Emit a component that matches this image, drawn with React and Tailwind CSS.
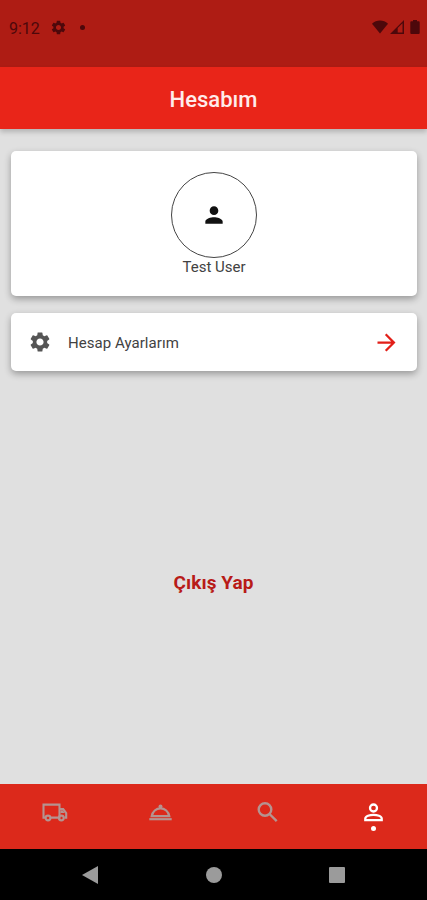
import { MdSettings, MdPerson, MdArrowForward } from "react-icons/md";

function StatusBar() {
  return (
    <div className="flex h-[67px] items-start bg-[#ae1c14] pl-[9px] pr-[7px] pt-[18px] text-[#4d080b]">
      <span className="w-[41px] pt-px text-[16px] leading-5">9:12</span>
      <MdSettings className="mt-px size-[17px]" />
      <span className="ml-[13px] mt-[7px] size-[5px] rounded-full bg-[#4d080b]" />
      <div className="ml-auto mt-[2px] flex items-start">
        <svg className="h-[14px] w-[16px]" viewBox="0 0 16 14" fill="currentColor">
          <path d="M0 3.7C4.5-.5 11.5-.5 16 3.7L8 13.5z" />
        </svg>
        <svg className="ml-[2px] mr-[6px] h-[14px] w-[14px]" viewBox="0 0 14 14" fill="currentColor">
          <path fillRule="evenodd" d="M0 14 14 0v14zM7.7 8v4.500h4.800V3.300z" />
        </svg>
        <svg className="h-[14px] w-[10px]" viewBox="0 0 10 14" fill="currentColor">
          <path d="M3 0h4v1.300h1.500c.8 0 1.200.5 1.200 1.200v10.200c0 .8-.5 1.300-1.200 1.300h-7C.8 14 .3 13.500.3 12.700V2.500C.3 1.800.8 1.300 1.500 1.300H3z" />
        </svg>
      </div>
    </div>
  );
}

function TruckIcon() {
  return (
    <svg className="size-[27px]" viewBox="0 0 27 27" fill="none" stroke="currentColor" strokeWidth="2.1">
      <path d="M4.500 18.600H2.500V5.600h16v13H10" />
      <path d="M18.500 10h3.700l3 4v4.600h-1.800" />
      <path d="M19.500 11.200h2.200l2 2.900h-4.200z" fill="currentColor" stroke="none" />
      <circle cx="7" cy="19" r="2.400" />
      <circle cx="20.300" cy="19" r="2.400" />
    </svg>
  );
}

function ServiceIcon() {
  return (
    <svg className="size-[27px]" viewBox="0 0 27 27" fill="none" stroke="currentColor" strokeWidth="2.200">
      <path d="M2.300 20.200h22.400" />
      <path d="M4.700 17.200c.8-4.700 4.500-7.900 8.800-7.900s8 3.200 8.800 7.900z" />
      <circle cx="13.500" cy="7.600" r="2" fill="currentColor" stroke="none" />
    </svg>
  );
}

function SearchIcon() {
  return (
    <svg className="size-[27px]" viewBox="0 0 27 27" fill="none" stroke="currentColor" strokeWidth="2.400">
      <circle cx="11" cy="10.500" r="6.300" />
      <path d="M15.500 15l7.200 7.200" />
    </svg>
  );
}

function AccountIcon() {
  return (
    <svg className="size-[27px]" viewBox="0 0 27 27" fill="none" stroke="currentColor" strokeWidth="2.300">
      <circle cx="13.500" cy="9" r="3.500" />
      <path d="M5.300 21.200v-1.700c0-2.300 4.500-3.700 8.200-3.700s8.200 1.400 8.200 3.700v1.700z" />
    </svg>
  );
}

const cardClass =
  "ml-[11px] mr-[10px] rounded-[5px] bg-white shadow-[0_3px_7px_rgba(0,0,0,0.32)]";

export default function App() {
  return (
    <div className="flex h-[900px] w-[427px] flex-col overflow-hidden bg-[#e0e0e0] font-['Roboto',sans-serif] text-[#424242]">
      <StatusBar />
      <header className="z-10 flex h-[62px] items-center justify-center bg-[#e92519] pt-[2px] text-[22px] font-medium text-[#ffeceb] shadow-[0_3px_5px_rgba(0,0,0,0.2)]">
        <h1>Hesabım</h1>
      </header>

      <main className="flex flex-1 flex-col pt-[22px]">
        <section className={`${cardClass} flex h-[145px] flex-col items-center pt-[21px]`}>
          <div className="flex size-[86px] items-center justify-center rounded-full border border-[#444]">
            <MdPerson className="size-[26px] text-[#111]" />
          </div>
          <p className="text-[15px] leading-[18px]">Test User</p>
        </section>

        <button className={`${cardClass} mt-[17px] flex h-[58px] items-center pl-[17px] pr-[17px]`}>
          <MdSettings className="size-6 text-[#555]" />
          <span className="ml-4 pt-px text-[15px] leading-[18px] tracking-[0.05px]">Hesap Ayarlarım</span>
          <MdArrowForward className="ml-auto size-[27px] text-[#e21f18]" />
        </button>

        <button className="mt-[200px] self-center text-[19px] font-bold leading-6 tracking-[0.05px] text-[#b81b18]">
          Çıkış Yap
        </button>
      </main>

      <nav className="grid h-[65px] grid-cols-4 justify-items-center bg-[#dc291b] pl-px pt-[15px] text-[#b59390]">
        <TruckIcon />
        <ServiceIcon />
        <SearchIcon />
        <div className="flex flex-col items-center text-white">
          <AccountIcon />
          <span className="size-[5px] rounded-full bg-white" />
        </div>
      </nav>

      <div className="flex h-[51px] items-center justify-between bg-black px-[82px] text-[#9b9b9b]">
        <svg className="h-[18px] w-[16px]" viewBox="0 0 16 18" fill="currentColor">
          <path d="M16 0v18L0 9z" />
        </svg>
        <span className="size-4 rounded-full bg-[#9b9b9b]" />
        <span className="size-4 rounded-[1px] bg-[#9b9b9b]" />
      </div>
    </div>
  );
}
